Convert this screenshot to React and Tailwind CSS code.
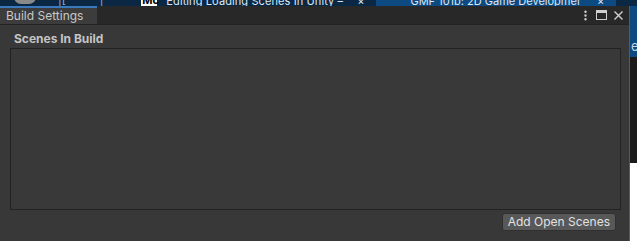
import { MoreVertical } from 'lucide-react'

const font = { fontFamily: 'Inter, "Noto Sans", sans-serif' }

function BrowserStrip() {
  return (
    <div className="h-[6px] overflow-hidden bg-[#0a2744] flex items-end text-[11px] leading-[13px] text-[#dfe7ef]">
      <div className="w-[14px] shrink-0" />
      <div className="w-[22px] h-[14px] mb-[2px] rounded-full bg-[#8a8a8a] shrink-0" />
      <div className="w-[22px] shrink-0" />
      <span className="mb-[-1px] text-[#9fb0c2]">|[</span>
      <div className="w-[34px] shrink-0" />
      <span className="mb-[-1px] text-[#9fb0c2]">|</span>
      <div className="w-[38px] shrink-0" />
      <div className="w-[16px] h-[12px] bg-white text-black text-[11px] leading-[12px] font-bold shrink-0 pl-[1px]">Mc</div>
      <span className="ml-[9px] mb-[-2px] whitespace-nowrap tracking-[0.1px]">Editing Loading Scenes In Unity –</span>
      <span className="ml-[14px] mb-[-2px]">×</span>
      <div className="ml-[12px] h-full bg-[#0e4a82] flex items-end w-[240px] shrink-0">
        <span className="ml-[34px] mb-[-2px] whitespace-nowrap">GMF 101b: 2D Game Developmer</span>
        <span className="ml-[16px] mb-[-2px]">×</span>
      </div>
    </div>
  )
}

export default function App() {
  return (
    <div className="w-[637px] h-[241px] bg-[#0a2744] flex flex-col overflow-hidden" style={font}>
      <BrowserStrip />
      <div className="flex flex-1 min-h-0">
        {/* editor window */}
        <div className="w-[629px] flex flex-col bg-[#383838]">
          {/* tab bar */}
          <div className="h-[19px] flex bg-[#282828] border-b border-[#232323]">
            <div className="w-[97px] bg-[#3c3c3c] border-t-2 border-[#3a79bb] flex items-center pl-[6px] text-[12px] text-[#c8c8c8]">
              Build Settings
            </div>
            <div className="flex-1" />
            <div className="flex items-center gap-[4px] pr-[5px] text-[#d0d0d0]">
              <MoreVertical size={13} strokeWidth={2.5} />
              <div className="w-[11px] h-[10px] border border-[#d0d0d0] border-t-[3px]" />
              <svg width="11" height="11" viewBox="0 0 11 11" className="ml-[2px]">
                <path d="M1.5 1.5 L9.5 9.5 M9.5 1.5 L1.5 9.5" stroke="#d0d0d0" strokeWidth="1.4" />
              </svg>
            </div>
          </div>

          {/* content */}
          <div className="flex-1 flex flex-col px-[10px]">
            <div className="h-[23px] flex items-center pl-[4px] pt-[4px] text-[12px] font-bold text-[#c4c4c4]">
              Scenes In Build
            </div>
            <div className="w-[611px] h-[162px] border border-[#222222] bg-[#393939]" />
            <div className="flex justify-end pr-[3px] pt-[3px]">
              <button className="h-[18px] px-[5px] rounded-[3px] bg-[#585858] border border-[#303030] text-[12px] leading-none text-[#e2e2e2]">
                Add Open Scenes
              </button>
            </div>
          </div>
        </div>

        {/* right edge strip */}
        <div className="flex-1 flex flex-col border-l border-[#5a5a5a]">
          <div className="h-[51px] bg-[#0e4a82] flex items-center overflow-hidden text-[13px] text-[#c8d4e0]">
            <span className="ml-[1px] mt-[30px]">e</span>
          </div>
          <div className="h-[106px] bg-[#1b1b1b]" />
          <div className="flex-1 bg-white" />
        </div>
      </div>
    </div>
  )
}
